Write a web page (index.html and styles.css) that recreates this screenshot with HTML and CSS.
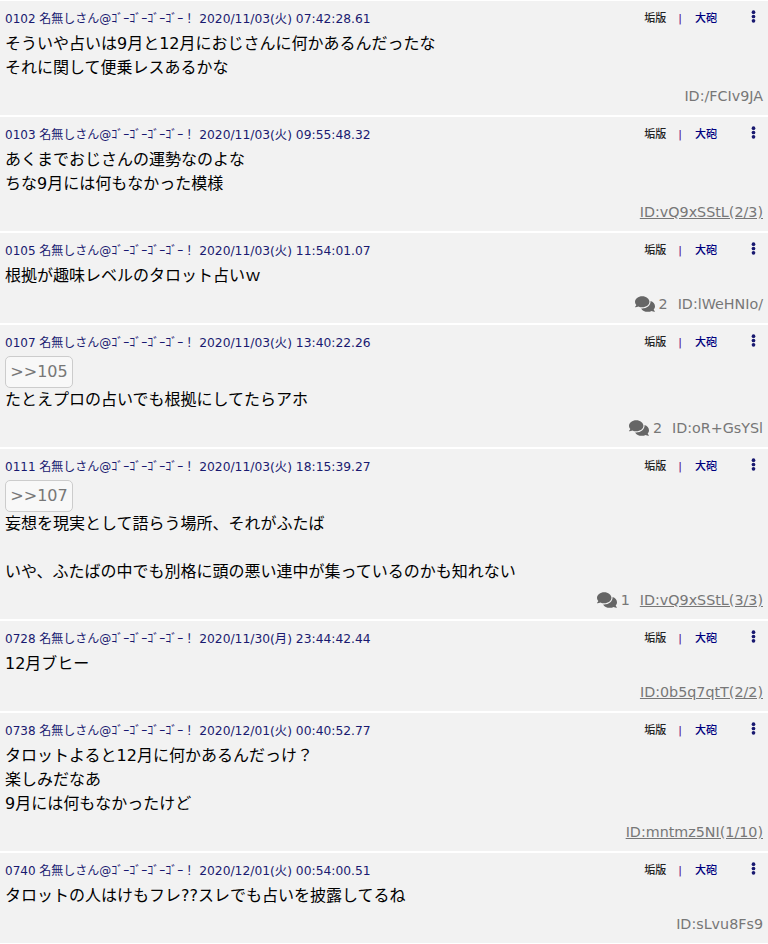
FILE: index.html
```html
<!DOCTYPE html>
<html lang="ja">
<head>
    <meta charset="UTF-8">
    <meta name="viewport" content="width=device-width, initial-scale=1.0">
    <title>レス一覧</title>
    <link rel="stylesheet" href="styles.css">
</head>
<body>
    <svg class="icon-defs" xmlns="http://www.w3.org/2000/svg">
        <symbol id="icon-comments" viewBox="0 0 576 512">
            <path d="M416 192c0-88.4-93.1-160-208-160S0 103.6 0 192c0 34.3 14.1 65.9 38 92-13.4 30.2-35.5 54.2-35.8 54.5-2.2 2.3-2.8 5.7-1.5 8.7S4.8 352 8 352c36.6 0 66.9-12.3 88.7-25 32.2 15.7 70.3 25 111.3 25 114.9 0 208-71.6 208-160zm122 220c23.9-26 38-57.7 38-92 0-66.9-53.5-124.2-129.3-148.1.9 6.6 1.3 13.3 1.3 20.1 0 105.9-107.7 192-240 192-10.8 0-21.3-.8-31.7-1.9C207.8 439.6 281.8 480 368 480c41 0 79.1-9.2 111.3-25 21.8 12.7 52.1 25 88.7 25 3.2 0 6.1-1.9 7.3-4.8 1.3-2.9.7-6.3-1.5-8.7-.3-.3-22.4-24.2-35.8-54.5z"/>
        </symbol>
        <symbol id="icon-dots" viewBox="0 0 4 12">
            <circle cx="2" cy="2" r="1.7"/>
            <circle cx="2" cy="6" r="1.7"/>
            <circle cx="2" cy="10" r="1.7"/>
        </symbol>
    </svg>

    <main class="thread">
        <article class="post">
            <header class="post-head">
                <span class="meta">0102 名無しさん@ｺﾞｰｺﾞｰｺﾞｰｺﾞｰ！ <time>2020/11/03(火) 07:42:28.61</time></span>
                <nav class="actions"><a>垢版</a><i class="sep">|</i><a class="strong">大砲</a><svg class="dots"><use href="#icon-dots"/></svg></nav>
            </header>
            <div class="post-body">そういや占いは9月と12月におじさんに何かあるんだったな<br>それに関して便乗レスあるかな</div>
            <footer class="post-foot"><span class="post-id">ID:/FCIv9JA</span></footer>
        </article>

        <article class="post">
            <header class="post-head">
                <span class="meta">0103 名無しさん@ｺﾞｰｺﾞｰｺﾞｰｺﾞｰ！ <time>2020/11/03(火) 09:55:48.32</time></span>
                <nav class="actions"><a>垢版</a><i class="sep">|</i><a class="strong">大砲</a><svg class="dots"><use href="#icon-dots"/></svg></nav>
            </header>
            <div class="post-body">あくまでおじさんの運勢なのよな<br>ちな9月には何もなかった模様</div>
            <footer class="post-foot"><a class="post-id linked">ID:vQ9xSStL(2/3)</a></footer>
        </article>

        <article class="post">
            <header class="post-head">
                <span class="meta">0105 名無しさん@ｺﾞｰｺﾞｰｺﾞｰｺﾞｰ！ <time>2020/11/03(火) 11:54:01.07</time></span>
                <nav class="actions"><a>垢版</a><i class="sep">|</i><a class="strong">大砲</a><svg class="dots"><use href="#icon-dots"/></svg></nav>
            </header>
            <div class="post-body">根拠が趣味レベルのタロット占いｗ</div>
            <footer class="post-foot">
                <span class="replies"><svg class="comments"><use href="#icon-comments"/></svg>2</span>
                <span class="post-id">ID:lWeHNIo/</span>
            </footer>
        </article>

        <article class="post">
            <header class="post-head">
                <span class="meta">0107 名無しさん@ｺﾞｰｺﾞｰｺﾞｰｺﾞｰ！ <time>2020/11/03(火) 13:40:22.26</time></span>
                <nav class="actions"><a>垢版</a><i class="sep">|</i><a class="strong">大砲</a><svg class="dots"><use href="#icon-dots"/></svg></nav>
            </header>
            <a class="anchor">&gt;&gt;105</a>
            <div class="post-body">たとえプロの占いでも根拠にしてたらアホ</div>
            <footer class="post-foot">
                <span class="replies"><svg class="comments"><use href="#icon-comments"/></svg>2</span>
                <span class="post-id">ID:oR+GsYSl</span>
            </footer>
        </article>

        <article class="post">
            <header class="post-head">
                <span class="meta">0111 名無しさん@ｺﾞｰｺﾞｰｺﾞｰｺﾞｰ！ <time>2020/11/03(火) 18:15:39.27</time></span>
                <nav class="actions"><a>垢版</a><i class="sep">|</i><a class="strong">大砲</a><svg class="dots"><use href="#icon-dots"/></svg></nav>
            </header>
            <a class="anchor">&gt;&gt;107</a>
            <div class="post-body">妄想を現実として語らう場所、それがふたば<br><br>いや、ふたばの中でも別格に頭の悪い連中が集っているのかも知れない</div>
            <footer class="post-foot">
                <span class="replies"><svg class="comments"><use href="#icon-comments"/></svg>1</span>
                <a class="post-id linked">ID:vQ9xSStL(3/3)</a>
            </footer>
        </article>

        <article class="post">
            <header class="post-head">
                <span class="meta">0728 名無しさん@ｺﾞｰｺﾞｰｺﾞｰｺﾞｰ！ <time>2020/11/30(月) 23:44:42.44</time></span>
                <nav class="actions"><a>垢版</a><i class="sep">|</i><a class="strong">大砲</a><svg class="dots"><use href="#icon-dots"/></svg></nav>
            </header>
            <div class="post-body">12月ブヒー</div>
            <footer class="post-foot"><a class="post-id linked">ID:0b5q7qtT(2/2)</a></footer>
        </article>

        <article class="post">
            <header class="post-head">
                <span class="meta">0738 名無しさん@ｺﾞｰｺﾞｰｺﾞｰｺﾞｰ！ <time>2020/12/01(火) 00:40:52.77</time></span>
                <nav class="actions"><a>垢版</a><i class="sep">|</i><a class="strong">大砲</a><svg class="dots"><use href="#icon-dots"/></svg></nav>
            </header>
            <div class="post-body">タロットよると12月に何かあるんだっけ？<br>楽しみだなあ<br>9月には何もなかったけど</div>
            <footer class="post-foot"><a class="post-id linked">ID:mntmz5NI(1/10)</a></footer>
        </article>

        <article class="post">
            <header class="post-head">
                <span class="meta">0740 名無しさん@ｺﾞｰｺﾞｰｺﾞｰｺﾞｰ！ <time>2020/12/01(火) 00:54:00.51</time></span>
                <nav class="actions"><a>垢版</a><i class="sep">|</i><a class="strong">大砲</a><svg class="dots"><use href="#icon-dots"/></svg></nav>
            </header>
            <div class="post-body">タロットの人はけもフレ??スレでも占いを披露してるね</div>
            <footer class="post-foot"><span class="post-id">ID:sLvu8Fs9</span></footer>
        </article>
    </main>
</body>
</html>
```

FILE: styles.css
```css
html, body {
    margin: 0;
    padding: 0;
}

body {
    background: #fff;
    color: #000;
    font-family: "DejaVu Sans", "Noto Sans CJK JP", sans-serif;
    height: 944px;
    overflow: hidden;
}

.icon-defs {
    display: none;
}

.thread {
    display: flex;
    flex-direction: column;
    gap: 2px;
    padding-top: 1px;
}

.post {
    background: #f2f2f2;
    padding: 0 5px;
}

.post-head {
    display: flex;
    justify-content: space-between;
    height: 31px;
}

.meta {
    color: #191970;
    font-size: 12px;
    line-height: 37px;
    white-space: nowrap;
}

.meta time {
    font-size: 12.3px;
}

.actions {
    display: flex;
    align-items: flex-start;
    color: #222;
    font-size: 11px;
    font-weight: 500;
    line-height: 36px;
}

.actions .sep {
    font-style: normal;
    margin: 0 13px 0 12px;
    color: #4b0082;
}

.actions .strong {
    color: #000080;
}

.dots {
    width: 5px;
    height: 13px;
    margin: 9px 7px 0 34px;
    fill: #191970;
}

.anchor {
    display: block;
    box-sizing: border-box;
    width: 68px;
    height: 32px;
    background: #f8f8f8;
    border: 1px solid #ccc;
    border-radius: 5px;
    color: #777;
    font-size: 16px;
    line-height: 30px;
    text-align: center;
}

.post-body {
    font-size: 16px;
    line-height: 24px;
    white-space: nowrap;
}

.post-foot {
    display: flex;
    justify-content: flex-end;
    align-items: center;
    gap: 10px;
    height: 35px;
    padding-bottom: 3px;
    box-sizing: border-box;
    color: #777;
    font-size: 14.3px;
}

.replies {
    display: flex;
    align-items: center;
    gap: 4px;
}

.comments {
    width: 20px;
    height: 18px;
    fill: #666;
}

.linked {
    text-decoration: underline;
}
```
